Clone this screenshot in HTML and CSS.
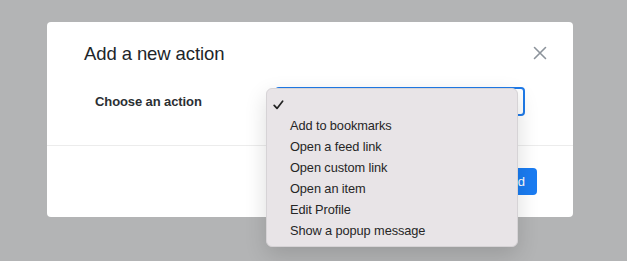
FILE: index.html
```html
<!DOCTYPE html>
<html lang="en">
<head>
  <meta charset="UTF-8">
  <meta name="viewport" content="width=device-width, initial-scale=1.0">
  <title>Add a new action</title>
  <link rel="stylesheet" href="styles.css">
</head>
<body>
  <div class="modal">
    <div class="modal-header">
      <h2>Add a new action</h2>
      <button class="close-btn" aria-label="Close">
        <svg width="14" height="14" viewBox="0 0 14 14">
          <path d="M1.5 1.5 L12.5 12.5 M12.5 1.5 L1.5 12.5" stroke="#8c939b" stroke-width="1.6" stroke-linecap="round" fill="none"/>
        </svg>
      </button>
    </div>
    <div class="modal-body">
      <div class="form-row">
        <label class="form-label">Choose an action</label>
        <div class="select-wrap">
          <div class="select-box"></div>
          <ul class="dropdown">
            <li class="selected">
              <svg class="check" width="11" height="10" viewBox="0 0 11 10">
                <path d="M1.2 5.4 L4 8.4 L9.6 1.2" stroke="#222" stroke-width="1.7" stroke-linecap="round" stroke-linejoin="round" fill="none"/>
              </svg>
            </li>
            <li>Add to bookmarks</li>
            <li>Open a feed link</li>
            <li>Open custom link</li>
            <li>Open an item</li>
            <li>Edit Profile</li>
            <li>Show a popup message</li>
          </ul>
        </div>
      </div>
    </div>
    <div class="modal-footer">
      <button class="btn-primary">Add</button>
    </div>
  </div>
</body>
</html>
```

FILE: styles.css
```css
body {
  margin: 0;
  background-color: #b3b4b5;
  font-family: "Liberation Sans", Arial, sans-serif;
  height: 261px;
  overflow: hidden;
}

.modal {
  margin: 22px 0 0 47px;
  width: 526px;
  height: 195px;
  background-color: white;
  border-radius: 4px;
  display: flex;
  flex-direction: column;
}

.modal-header {
  height: 55px;
  box-sizing: border-box;
  padding: 20px 26px 0 37px;
  display: flex;
  justify-content: space-between;
  align-items: flex-start;
}

.modal-header h2 {
  margin: 0;
  font-size: 18.5px;
  line-height: 24px;
  font-weight: normal;
  letter-spacing: -0.1px;
  color: #212529;
}

.close-btn {
  border: none;
  background: none;
  padding: 0;
  margin-top: 4px;
  width: 14px;
  height: 14px;
  cursor: pointer;
}

.modal-body {
  padding: 10px 48px 29px 48px;
  border-bottom: 1px solid #ececec;
}

.form-row {
  display: flex;
  align-items: center;
}

.form-label {
  width: 180px;
  font-size: 13px;
  font-weight: bold;
  letter-spacing: -0.1px;
  color: #2b2f33;
}

.select-wrap {
  position: relative;
}

.select-box {
  width: 250px;
  height: 29px;
  box-sizing: border-box;
  border: 2px solid #1f7ae8;
  border-radius: 4px;
}

.dropdown {
  position: absolute;
  left: -9px;
  top: 1px;
  width: 252px;
  margin: 0;
  padding: 5px 0;
  list-style: none;
  background-color: #e8e4e7;
  border: 1px solid #d6d3d6;
  box-sizing: border-box;
  border-radius: 6px;
  box-shadow: 0 8px 22px rgba(0, 0, 0, 0.14);
  z-index: 5;
}

.dropdown li {
  height: 21px;
  line-height: 21px;
  padding-left: 23px;
  font-size: 12.8px;
  letter-spacing: -0.1px;
  color: #262626;
  position: relative;
}

.check {
  position: absolute;
  left: 6px;
  top: 6px;
}

.modal-footer {
  flex: 1;
  display: flex;
  justify-content: flex-end;
  align-items: flex-start;
  padding: 22px 36px 0 0;
}

.btn-primary {
  height: 27px;
  padding: 0 12px;
  border: none;
  border-radius: 4px;
  background-color: #1a7cf2;
  color: white;
  font-family: "Liberation Sans", Arial, sans-serif;
  font-size: 13px;
}
```
